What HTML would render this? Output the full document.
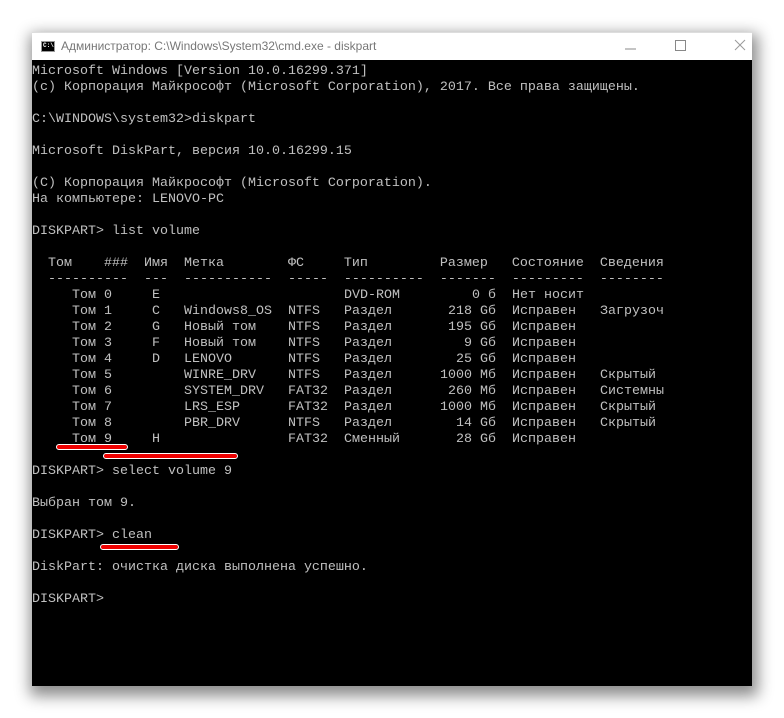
<!DOCTYPE html>
<html><head><meta charset="utf-8"><style>
body{margin:0;width:784px;height:718px;background:#fff;overflow:hidden;position:relative}
.win{position:absolute;left:32px;top:32px;width:720px;height:654px;background:#000;box-shadow:2px 6px 14px 4px rgba(0,0,0,.45)}
.tb{position:absolute;left:0;top:0;width:720px;height:28px;background:#fff;border-top:1px solid #ddd;box-sizing:border-box}
.tt{position:absolute;left:29px;top:6px;font:12px "Liberation Sans",sans-serif;color:#777}
.ic{position:absolute;left:9px;top:8px;width:14px;height:11px;background:#000;border:1px solid #999;box-sizing:border-box}
.ic:after{content:"C:\\";position:absolute;left:1px;top:0px;font:bold 6px "Liberation Mono",monospace;color:#fff}
.con{position:absolute;left:0;top:32px;width:720px;font:13.33px/16px "Liberation Mono","DejaVu Sans Mono",monospace;color:#c0c0c0}
.t{white-space:pre}
.r{position:relative;height:16px}
.r span{position:absolute;top:0;white-space:pre}
.u{position:absolute;height:4px;background:#e00;border:1px solid #fff;border-radius:3px}
</style></head><body>
<div class="win">
<div class="tb"><div class="ic"></div><div class="tt">Администратор: C:\Windows\System32\cmd.exe - diskpart</div>
<svg style="position:absolute;left:580px;top:4px" width="140" height="20"><line x1="13" y1="12" x2="24" y2="12" stroke="#888"/><rect x="63.5" y="3.5" width="10" height="10" fill="none" stroke="#888"/><line x1="123" y1="3" x2="133" y2="13" stroke="#999"/><line x1="133" y1="3" x2="123" y2="13" stroke="#999"/></svg>
</div>
<div class="con"><div class="t">Microsoft Windows [Version 10.0.16299.371]
(c) Корпорация Майкрософт (Microsoft Corporation), 2017. Все права защищены.

C:\WINDOWS\system32&gt;diskpart

Microsoft DiskPart, версия 10.0.16299.15

(C) Корпорация Майкрософт (Microsoft Corporation).
На компьютере: LENOVO-PC

DISKPART&gt; list volume
</div><div class="r"></div><div class="r"><span style="left:16px">Том    ###  Имя  Метка        ФС     Тип         Размер   Состояние  Сведения</span></div><div class="r"><span style="left:16px">----------  ---  -----------  -----  ----------  -------  ---------  --------</span></div><div class="r"><span style="left:40px">Том 0</span><span style="left:120px">E</span><span style="left:312px">DVD-ROM</span><span style="left:408px;width:56px;text-align:right">0 б</span><span style="left:480px">Нет носит</span></div><div class="r"><span style="left:40px">Том 1</span><span style="left:120px">C</span><span style="left:152px">Windows8_OS</span><span style="left:256px">NTFS</span><span style="left:312px">Раздел</span><span style="left:408px;width:56px;text-align:right">218 Gб</span><span style="left:480px">Исправен</span><span style="left:568px">Загрузоч</span></div><div class="r"><span style="left:40px">Том 2</span><span style="left:120px">G</span><span style="left:152px">Новый том</span><span style="left:256px">NTFS</span><span style="left:312px">Раздел</span><span style="left:408px;width:56px;text-align:right">195 Gб</span><span style="left:480px">Исправен</span></div><div class="r"><span style="left:40px">Том 3</span><span style="left:120px">F</span><span style="left:152px">Новый том</span><span style="left:256px">NTFS</span><span style="left:312px">Раздел</span><span style="left:408px;width:56px;text-align:right">9 Gб</span><span style="left:480px">Исправен</span></div><div class="r"><span style="left:40px">Том 4</span><span style="left:120px">D</span><span style="left:152px">LENOVO</span><span style="left:256px">NTFS</span><span style="left:312px">Раздел</span><span style="left:408px;width:56px;text-align:right">25 Gб</span><span style="left:480px">Исправен</span></div><div class="r"><span style="left:40px">Том 5</span><span style="left:152px">WINRE_DRV</span><span style="left:256px">NTFS</span><span style="left:312px">Раздел</span><span style="left:408px;width:56px;text-align:right">1000 Мб</span><span style="left:480px">Исправен</span><span style="left:568px">Скрытый</span></div><div class="r"><span style="left:40px">Том 6</span><span style="left:152px">SYSTEM_DRV</span><span style="left:256px">FAT32</span><span style="left:312px">Раздел</span><span style="left:408px;width:56px;text-align:right">260 Мб</span><span style="left:480px">Исправен</span><span style="left:568px">Системны</span></div><div class="r"><span style="left:40px">Том 7</span><span style="left:152px">LRS_ESP</span><span style="left:256px">FAT32</span><span style="left:312px">Раздел</span><span style="left:408px;width:56px;text-align:right">1000 Мб</span><span style="left:480px">Исправен</span><span style="left:568px">Скрытый</span></div><div class="r"><span style="left:40px">Том 8</span><span style="left:152px">PBR_DRV</span><span style="left:256px">NTFS</span><span style="left:312px">Раздел</span><span style="left:408px;width:56px;text-align:right">14 Gб</span><span style="left:480px">Исправен</span><span style="left:568px">Скрытый</span></div><div class="r"><span style="left:40px">Том 9</span><span style="left:120px">H</span><span style="left:256px">FAT32</span><span style="left:312px">Сменный</span><span style="left:408px;width:56px;text-align:right">28 Gб</span><span style="left:480px">Исправен</span></div><div class="t">
DISKPART&gt; select volume 9

Выбран том 9.

DISKPART&gt; clean

DiskPart: очистка диска выполнена успешно.

DISKPART&gt;</div></div>
</div>
<div class="u" style="left:56px;top:444px;width:70px"></div>
<div class="u" style="left:103px;top:453px;width:133px"></div>
<div class="u" style="left:100px;top:544px;width:77px"></div>
</body></html>
